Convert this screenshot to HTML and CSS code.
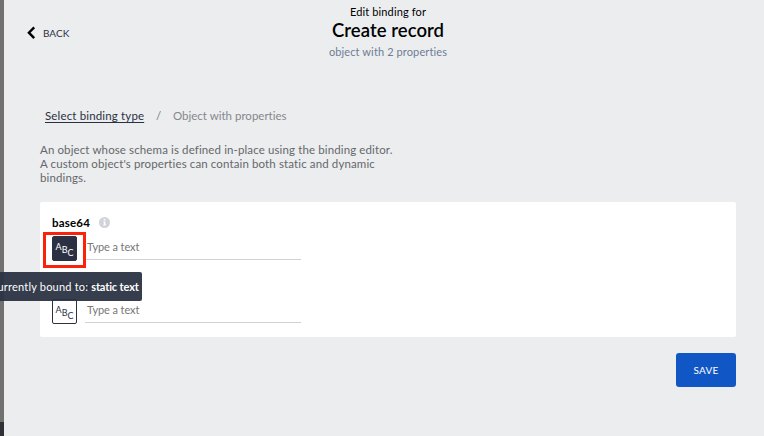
FILE: index.html
```html
<!DOCTYPE html>
<html lang="en">
<head>
<meta charset="utf-8">
<title>Edit binding</title>
<link rel="stylesheet" href="styles.css">
</head>
<body>
<div class="app">
  <aside class="backdrop"></aside>
  <main class="panel">
    <header class="header">
      <a class="back"><svg width="9" height="14" viewBox="0 0 9 14"><path d="M7.2 1.3 1.9 6.7l5.3 5.4"/></svg><span>BACK</span></a>
      <div class="heading">
        <div class="eyebrow">Edit binding for</div>
        <h1>Create record</h1>
        <div class="summary">object with 2 properties</div>
      </div>
    </header>
    <nav class="crumbs"><a>Select binding type</a><span class="slash">/</span><span class="current">Object with properties</span></nav>
    <p class="description">An object whose schema is defined in-place using the binding editor.<br>A custom object's properties can contain both static and dynamic<br>bindings.</p>
    <section class="card">
      <div class="field">
        <div class="label"><span>base64</span><svg class="info" width="11" height="11" viewBox="0 0 11 11"><circle cx="5.5" cy="5.5" r="5.5"/><path d="M4.7 2h1.7v1.5H4.7zM4.2 4.4h2.2v3.2H7v1H4.2v-1h.6V5.3h-.6z"/></svg></div>
        <div class="control">
          <div class="type selected"><span>A</span><span>B</span><span>C</span><i class="highlight"></i></div>
          <div class="input">Type a text</div>
        </div>
        <div class="tooltip">Currently bound to: <b>static text</b></div>
      </div>
      <div class="field">
        <div class="label"><span>fileName</span><svg class="info" width="11" height="11" viewBox="0 0 11 11"><circle cx="5.5" cy="5.5" r="5.5"/><path d="M4.7 2h1.7v1.5H4.7zM4.2 4.4h2.2v3.2H7v1H4.2v-1h.6V5.3h-.6z"/></svg></div>
        <div class="control">
          <div class="type"><span>A</span><span>B</span><span>C</span></div>
          <div class="input">Type a text</div>
        </div>
      </div>
    </section>
    <footer class="actions"><button>SAVE</button></footer>
  </main>
</div>
</body>
</html>
```
FILE: styles.css
```css
* { box-sizing: border-box; }
body { margin: 0; font-family: Lato, "Liberation Sans", sans-serif; font-size: 11.5px; font-variant-ligatures: none; color: #2b3142; }
.app { display: flex; width: 764px; height: 436px; overflow: hidden; background: #ecedef; }
.backdrop { width: 4px; background: linear-gradient(#717171 0 422px, #303136 422px); }
.panel { flex: 1; padding: 0 28px 0 36px; }
.header { height: 108px; display: grid; grid-template-columns: 1fr 160px 1fr; }
.back { display: flex; align-items: center; gap: 7px; height: 14px; margin: 26px 0 0 -13px; font-size: 10px; }
.back span { line-height: 14px; }
.back svg { fill: none; stroke: #000; stroke-width: 2.4; }
.heading { text-align: center; white-space: nowrap; color: #000; }
.eyebrow { margin-top: 5px; line-height: 14px; font-size: 11px; letter-spacing: .13px; }
h1 { margin: 0; font-size: 18.5px; line-height: 22px; font-weight: 600; letter-spacing: .06px; }
.summary { margin-top: 4px; line-height: 14px; color: #6e7c93; font-size: 11px; letter-spacing: .12px; }
.crumbs { display: flex; height: 16px; line-height: 16px; padding-left: 5px; white-space: nowrap; }
.crumbs a { text-decoration: underline; text-underline-offset: 2px; width: 99px; letter-spacing: .15px; }
.slash { width: 29px; padding-left: 12px; color: #777; }
.current { color: #85878b; }
.description { margin: 19px 0 17px; line-height: 14px; color: #65676b; white-space: nowrap; letter-spacing: .12px; }
.card { height: 135px; border-radius: 2px; background: #fff; padding: 13px 12px 0; }
.field { position: relative; height: 63px; }
.label { display: flex; align-items: center; gap: 9px; height: 15px; font-weight: 700; font-size: 11.5px; letter-spacing: .2px; color: #000; }
.label span { line-height: 13px; }
.info { fill: #d0d3d9; }
.info path { fill: #fff; }
.control { display: flex; gap: 8px; margin-top: 6px; }
.type { position: relative; display: flex; justify-content: center; width: 25px; height: 25px; border: 1px solid #2b3142; border-radius: 2px; font-size: 9px; line-height: 11px; }
.type span:nth-child(1) { margin-top: 4px; }
.type span:nth-child(2) { margin-top: 7px; }
.type span:nth-child(3) { margin-top: 10px; }
.selected { background: #2b3142; color: #fff; }
.highlight { position: absolute; left: -10px; top: -5px; width: 43px; height: 36px; border: 3px solid #f9220b; }
.input { width: 216px; height: 24px; border-bottom: 1px solid #d0d1d8; padding-left: 2px; line-height: 21px; font-size: 11px; letter-spacing: -.1px; color: #777; }
.tooltip { position: absolute; z-index: 2; left: -62px; top: 57px; width: 152px; height: 29px; padding-right: 7px; border-radius: 2px; background: rgba(43,51,66,.95); color: #fff; font-size: 11px; line-height: 29px; text-align: right; white-space: nowrap; letter-spacing: .2px; }
.tooltip b { letter-spacing: -.13px; }
.actions { display: flex; justify-content: flex-end; margin-top: 16px; }
button { width: 60px; height: 34px; padding: 0; border: 0; border-radius: 3px; background: #1057c5; color: #fff; font: 10px/12px Lato, sans-serif; letter-spacing: .2px; }
```
